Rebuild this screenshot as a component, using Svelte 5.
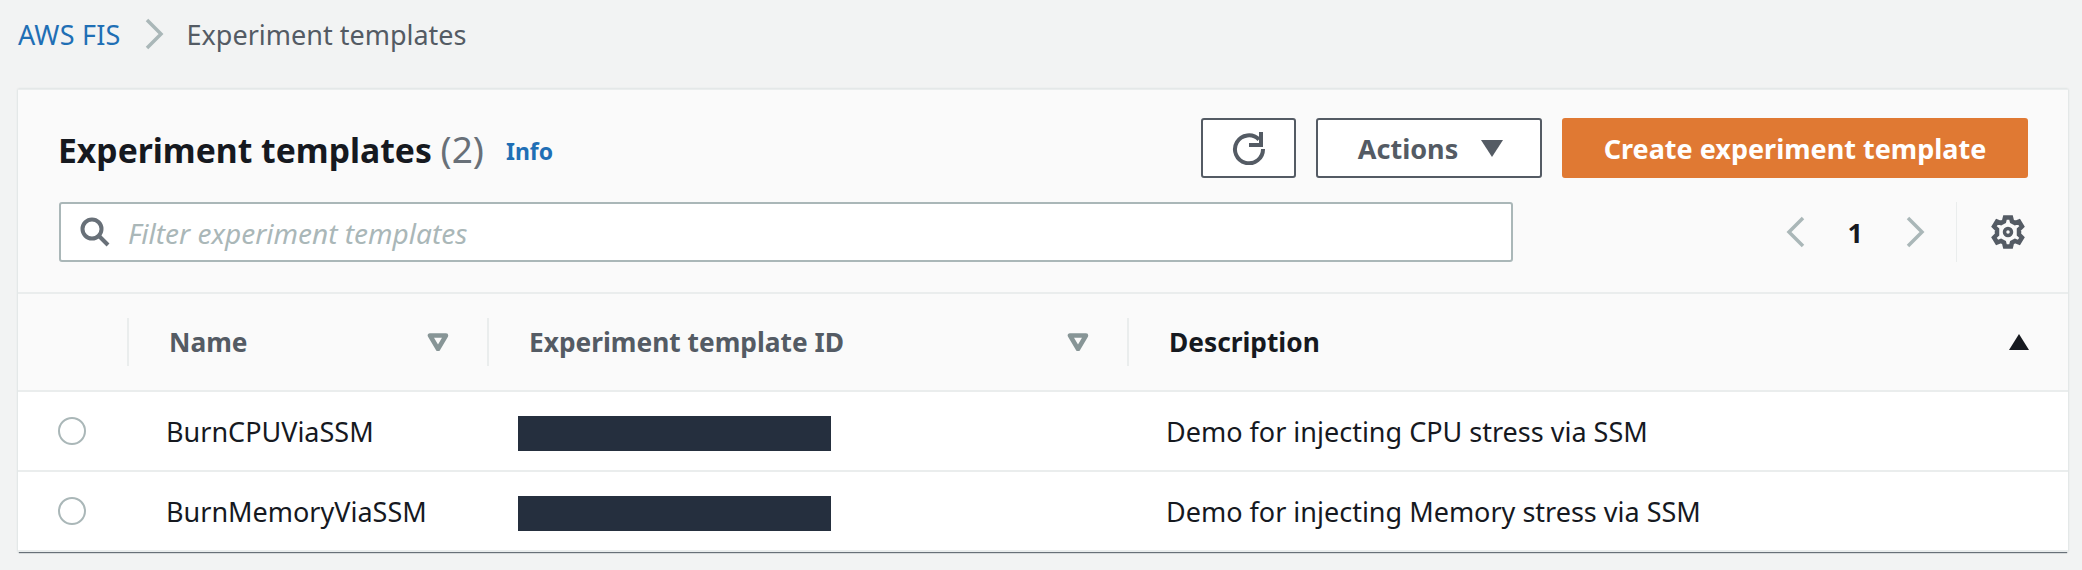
<script>
    const rows = [
        { name: "BurnCPUViaSSM", description: "Demo for injecting CPU stress via SSM" },
        { name: "BurnMemoryViaSSM", description: "Demo for injecting Memory stress via SSM" }
    ];
</script>

<div class="page">
    <nav class="crumbs">
        <a href="#fis" class="link">AWS FIS</a>
        <svg class="crumb-sep" width="20" height="32" viewBox="0 0 20 32"><path d="M3 2l14 14L3 30" /></svg>
        <span>Experiment templates</span>
    </nav>

    <section class="card">
        <header class="head">
            <div class="head-top">
                <h1>Experiment templates <span class="count">(2)</span></h1>
                <a href="#info" class="info">Info</a>
                <div class="actions">
                    <button class="btn refresh" aria-label="Refresh">
                        <svg width="34" height="34" viewBox="0 0 34 34"><path d="M27 8.500A14 14 0 1 0 31 18" /><path d="M29 1v13H17" /></svg>
                    </button>
                    <button class="btn dropdown">Actions <i class="caret"></i></button>
                    <button class="btn primary">Create experiment template</button>
                </div>
            </div>
            <div class="head-bottom">
                <div class="filter">
                    <svg width="30" height="30" viewBox="0 0 30 30"><circle cx="12" cy="12" r="9.500" /><path d="M19 19l9 9" /></svg>
                    <span>Filter experiment templates</span>
                </div>
                <div class="pager">
                    <svg class="chev" width="20" height="32" viewBox="0 0 20 32"><path d="M17 2L3 16l14 14" /></svg>
                    <b>1</b>
                    <svg class="chev" width="20" height="32" viewBox="0 0 20 32"><path d="M3 2l14 14L3 30" /></svg>
                </div>
                <div class="prefs">
                    <svg width="34" height="34" viewBox="0 0 34 34"><path d="M14 2.500h6l1 4 3 1.500 4-1.500 3 5-3 3v5l3 3-3 5-4-1.500-3 1.500-1 4h-6l-1-4-3-1.500-4 1.500-3-5 3-3v-5l-3-3 3-5 4 1.500 3-1.500z" /><circle cx="17" cy="17" r="3.500" /></svg>
                </div>
            </div>
        </header>

        <div class="table">
            <div class="tr th">
                <div></div>
                <div class="col"><span>Name</span><svg class="sort" width="22" height="18" viewBox="0 0 22 18"><path d="M3 2.500h16L11 16z" /></svg></div>
                <div class="col"><span>Experiment template ID</span><svg class="sort" width="22" height="18" viewBox="0 0 22 18"><path d="M3 2.500h16L11 16z" /></svg></div>
                <div class="col active"><span>Description</span><svg class="sorted" width="22" height="18" viewBox="0 0 22 18"><path d="M11 1l10 16H1z" /></svg></div>
            </div>
            {#each rows as row}
                <div class="tr td">
                    <div class="radio-cell"><i class="radio"></i></div>
                    <div>{row.name}</div>
                    <div class="id-cell"><i class="redacted"></i></div>
                    <div>{row.description}</div>
                </div>
            {/each}
        </div>
    </section>
</div>

<style>
    :global(body) {
        margin: 0;
        background: #f2f3f3;
    }
    .page {
        height: 570px;
        box-sizing: border-box;
        padding: 0 14px 0 18px;
        font-family: "Noto Sans", "Liberation Sans", sans-serif;
        font-size: 27px;
        color: #16191f;
    }
    .crumbs {
        height: 89px;
        padding-bottom: 21px;
        box-sizing: border-box;
        display: flex;
        align-items: center;
        gap: 23px;
        color: #545b64;
    }
    .link, .info {
        color: #1f6fb5;
        text-decoration: none;
    }
    .link {
        letter-spacing: 0.200px;
    }
    .crumb-sep path {
        fill: none;
        stroke: #aab7b8;
        stroke-width: 3.500;
    }
    .card {
        height: 463px;
        box-sizing: border-box;
        background: #fff;
        border-top: 1px solid #eaeded;
        box-shadow: 0 2px 1px -1px #687078, 0 0 2px #c7cfcf;
    }
    .head {
        height: 204px;
        box-sizing: border-box;
        background: #fafafa;
        padding: 28px 40px 0 41px;
        border-bottom: 2px solid #eaeded;
    }
    .head-top {
        display: flex;
        align-items: center;
        height: 60px;
    }
    h1 {
        margin: 0 0 0 -1px;
        font-size: 33.700px;
        font-weight: 700;
    }
    .count {
        font-size: 37px;
        font-weight: 400;
        color: #687078;
    }
    .info {
        margin-left: 22px;
        margin-top: 6px;
        font-size: 23px;
        font-weight: 700;
    }
    .actions {
        margin-left: auto;
        display: flex;
        gap: 20px;
    }
    .btn {
        height: 60px;
        box-sizing: border-box;
        border: 2px solid #545b64;
        border-radius: 3px;
        background: #fff;
        color: #545b64;
        font: 700 27px "Noto Sans", "Liberation Sans", sans-serif;
        display: flex;
        align-items: center;
        justify-content: center;
    }
    .refresh {
        width: 95px;
    }
    .refresh path {
        fill: none;
        stroke: #545b64;
        stroke-width: 4;
    }
    .dropdown {
        width: 226px;
        gap: 23px;
        padding-left: 9px;
    }
    .caret {
        width: 0;
        height: 0;
        border-left: 11px solid transparent;
        border-right: 11px solid transparent;
        border-top: 17px solid #545b64;
    }
    .primary {
        width: 466px;
        background: #e07933;
        border-color: #e07933;
        color: #fff;
    }
    .head-bottom {
        display: flex;
        align-items: center;
        margin-top: 24px;
        height: 60px;
    }
    .filter {
        width: 1454px;
        height: 60px;
        box-sizing: border-box;
        border: 2px solid #aab7b8;
        border-radius: 3px;
        background: #fff;
        display: flex;
        align-items: center;
        gap: 18px;
        padding-left: 19px;
        color: #aab7b8;
        font-size: 28px;
        font-style: italic;
    }
    .filter span {
        margin-top: 2px;
    }
    .filter svg {
        fill: none;
        stroke: #687078;
        stroke-width: 4;
    }
    .pager {
        margin-left: auto;
        display: flex;
        align-items: center;
        gap: 42px;
        padding-right: 31px;
    }
    .chev path {
        fill: none;
        stroke: #aab7b8;
        stroke-width: 3.500;
    }
    .prefs {
        height: 60px;
        display: flex;
        align-items: center;
        padding: 0 3px 0 34px;
        border-left: 1px solid #eaeded;
    }
    .prefs svg {
        fill: none;
        stroke: #545b64;
        stroke-width: 4.500;
    }
    .prefs circle {
        stroke-width: 3.500;
    }
    .tr {
        display: grid;
        grid-template-columns: 109px 360px 640px 1fr;
        align-items: center;
        box-sizing: border-box;
    }
    .th {
        height: 98px;
        background: #fafafa;
        border-bottom: 2px solid #eaeded;
        font-weight: 700;
        font-size: 26.300px;
        color: #545b64;
    }
    .col {
        height: 48px;
        display: flex;
        align-items: center;
        justify-content: space-between;
        border-left: 2px solid #eaeded;
        padding: 0 38px 0 40px;
    }
    .sort path {
        fill: none;
        stroke: #879596;
        stroke-width: 4.500;
        stroke-linejoin: round;
    }
    .active {
        color: #16191f;
    }
    .sorted path {
        fill: #16191f;
    }
    .td {
        height: 80px;
        border-bottom: 2px solid #eaeded;
    }
    .td > div:nth-child(2), .td > div:nth-child(4) {
        padding-left: 39px;
    }
    .radio-cell {
        padding-left: 40px;
        display: flex;
    }
    .radio {
        width: 28px;
        height: 28px;
        box-sizing: border-box;
        border: 2px solid #aab7b8;
        border-radius: 50%;
        background: #fff;
    }
    .id-cell {
        padding-left: 31px;
        display: flex;
    }
    .redacted {
        width: 313px;
        height: 35px;
        margin-top: 5px;
        background: #252f3e;
    }
</style>
